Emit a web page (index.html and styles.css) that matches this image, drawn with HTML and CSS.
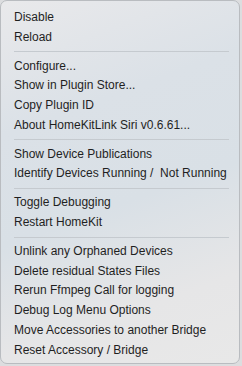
FILE: index.html
```html
<!DOCTYPE html>
<html lang="en">
<head>
    <meta charset="UTF-8">
    <title>Plugin Menu</title>
    <link rel="stylesheet" href="styles.css">
</head>
<body>
    <div class="menu">
        <div class="item">Disable</div>
        <div class="item">Reload</div>
        <div class="sep"></div>
        <div class="item">Configure...</div>
        <div class="item">Show in Plugin Store...</div>
        <div class="item">Copy Plugin ID</div>
        <div class="item">About HomeKitLink Siri v0.6.61...</div>
        <div class="sep"></div>
        <div class="item">Show Device Publications</div>
        <div class="item">Identify Devices Running /&nbsp; Not Running</div>
        <div class="sep"></div>
        <div class="item">Toggle Debugging</div>
        <div class="item">Restart HomeKit</div>
        <div class="sep"></div>
        <div class="item">Unlink any Orphaned Devices</div>
        <div class="item">Delete residual States Files</div>
        <div class="item">Rerun Ffmpeg Call for logging</div>
        <div class="item">Debug Log Menu Options</div>
        <div class="item">Move Accessories to another Bridge</div>
        <div class="item">Reset Accessory / Bridge</div>
    </div>
</body>
</html>
```

FILE: styles.css
```css
body {
    margin: 0;
    background: #dcdddf;
    font-family: "Liberation Sans", Arial, sans-serif;
}

.menu {
    box-sizing: border-box;
    width: 240px;
    height: 364px;
    padding: 7px 0 0 13px;
    border: 1px solid #b9bcc0;
    border-radius: 7px;
    background: linear-gradient(160deg, #e9e9eb 0%, #dbe1e7 30%, #d9e0e6 55%, #e6e6e7 80%, #e8e8e8 100%);
    color: #1f1f1f;
}

.item {
    height: 19.7px;
    line-height: 19.7px;
    font-size: 12px;
    white-space: nowrap;
}

.sep {
    height: 1px;
    margin: 4px 10px 4.3px 0;
    background: #c5cacf;
}
```
